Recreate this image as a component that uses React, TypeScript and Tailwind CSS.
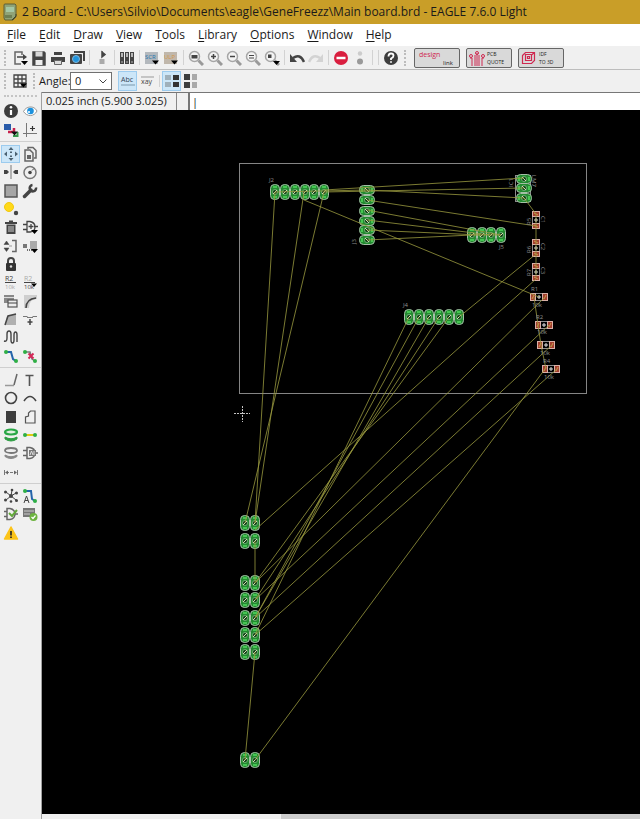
import type { ReactNode } from "react";

type Tool = { label: string; icon: ReactNode; active?: boolean };

const DARK = "#444444";

function Icon({ children }: { children: ReactNode }) {
  return (
    <svg viewBox="0 0 16 16" className="h-4 w-4" fill="none" stroke={DARK} strokeWidth="1.5">
      {children}
    </svg>
  );
}

const DropMark = () => <path d="M9 11h7l-3.500 4z" fill="#000" stroke="none" />;

function Magnifier({ children }: { children?: ReactNode }) {
  return (
    <>
      <path d="M10.500 10.500l4.500 4.500" stroke="#9a9a9a" strokeWidth="3" />
      <circle cx="6.500" cy="6.500" r="5" fill="#f4f4f4" stroke="#a6a6a6" strokeWidth="1.500" />
      {children}
    </>
  );
}

const fileTools: Tool[] = [
  {
    label: "Open",
    icon: (
      <>
        <path d="M10 5V2H3v12h6" stroke="#666" />
        <path d="M5 7h8" />
        <path d="M11 4l4 3-4 3z" fill={DARK} stroke="none" />
        <DropMark />
      </>
    ),
  },
  {
    label: "Save",
    icon: (
      <>
        <path d="M2 2h11l1 1v12H2z" fill={DARK} />
        <path d="M4.500 1.500h7v5h-7z" fill="#d8d8d8" stroke="none" />
        <path d="M4.500 10h7v5h-7z" fill="#eee" stroke="none" />
      </>
    ),
  },
  {
    label: "Print",
    icon: (
      <>
        <path d="M4 2h8v3H4zM1 7h14v5H1z" fill={DARK} stroke="none" />
        <path d="M4.500 10.500h7v4h-7z" fill="#ddd" stroke="#666" strokeWidth="1" />
      </>
    ),
  },
  {
    label: "CAM processor",
    icon: (
      <>
        <path d="M5 2h10v9" stroke="#444" strokeWidth="2" />
        <rect x="1" y="4" width="12" height="10" rx="1" fill={DARK} stroke="none" />
        <circle cx="7" cy="9" r="3.500" fill="#2093dc" stroke="#7fb8dc" strokeWidth="1" />
      </>
    ),
  },
];

const zoomTools: Tool[] = [
  {
    label: "Fit",
    icon: (
      <Magnifier>
        <rect x="3.500" y="5" width="6" height="3.500" fill={DARK} stroke="none" />
      </Magnifier>
    ),
  },
  {
    label: "Zoom in",
    icon: (
      <Magnifier>
        <path d="M4 6.500h5M6.500 4v5" />
      </Magnifier>
    ),
  },
  {
    label: "Zoom out",
    icon: (
      <Magnifier>
        <path d="M4 6.500h5" />
      </Magnifier>
    ),
  },
  {
    label: "Redraw",
    icon: (
      <Magnifier>
        <path d="M4 5.500h5M4 8h5" strokeWidth="1" />
      </Magnifier>
    ),
  },
  {
    label: "Select",
    icon: (
      <>
        <Magnifier>
          <rect x="4" y="4.500" width="3.500" height="3.500" fill={DARK} stroke="none" />
        </Magnifier>
        <DropMark />
      </>
    ),
  },
];

const sideGroups: { height: string; tools: (Tool | null)[] }[] = [
  {
    height: "h-[37px]",
    tools: [
      {
        label: "Info",
        icon: (
          <>
            <circle cx="8" cy="8" r="7" fill="#3d3d3d" stroke="none" />
            <path d="M8 7v5" stroke="#fff" strokeWidth="2.200" />
            <circle cx="8" cy="4.300" r="1.300" fill="#fff" stroke="none" />
          </>
        ),
      },
      {
        label: "Show",
        icon: (
          <>
            <path d="M1.500 8.500C4 3 12 2 15 8c-3 6-10 6-13.500.5z" fill="#fff" stroke="#999" strokeWidth="1" />
            <circle cx="8.500" cy="8" r="3.300" fill="#1c91dd" stroke="none" />
            <circle cx="7" cy="9" r="1" fill="#fff" stroke="none" />
          </>
        ),
      },
      {
        label: "Display",
        icon: (
          <>
            <rect x="1" y="2" width="7" height="6" fill="#2a5caa" stroke="none" />
            <path d="M5 10h6V6" stroke="#c8204c" strokeWidth="2.500" />
            <path d="M10 14h4.500v-4" stroke="#36994b" strokeWidth="2" />
            <path d="M8 9.500h7l-3.500 4z" fill="#111" stroke="none" />
          </>
        ),
      },
      {
        label: "Mark",
        icon: (
          <>
            <path d="M4.500 1v14M1 11.500h14" stroke="#777" strokeWidth="1" />
            <path d="M10.500 4v5M8 6.500h5" stroke="#333" strokeWidth="1.200" />
          </>
        ),
      },
    ],
  },
  {
    height: "h-[220px]",
    tools: [
      {
        label: "Move",
        active: true,
        icon: (
          <path
            d="M8 1l2.500 3h-5zM8 15l2.500-3h-5zM1 8l3-2.500v5zM15 8l-3-2.500v5zM7 5.500h2v1.500H7zM7 9.500h2V11H7z"
            fill="#4b6272"
            stroke="none"
          />
        ),
      },
      {
        label: "Copy",
        icon: (
          <>
            <path d="M6 3V1.500h5l3 3V12h-2" stroke="#666" />
            <path d="M3 4h5l3 3v8H3z" fill="#eee" stroke="#666" />
            <rect x="5" y="9" width="4" height="4" fill="#666" stroke="none" />
          </>
        ),
      },
      {
        label: "Mirror",
        icon: (
          <>
            <path d="M8 1v14" stroke="#777" strokeWidth="1" />
            <path d="M1 6h3l2 2-2 2H1zM15 6h-3l-2 2 2 2h3z" fill={DARK} stroke="none" />
          </>
        ),
      },
      {
        label: "Rotate",
        icon: (
          <>
            <circle cx="8" cy="8.500" r="6" stroke="#777" />
            <circle cx="8" cy="8.500" r="1.800" fill={DARK} stroke="none" />
            <path d="M10 6.500l2-2" strokeWidth="1" />
          </>
        ),
      },
      { label: "Group", icon: <rect x="2" y="2" width="12" height="12" fill="#a5a5a5" stroke="#555" /> },
      {
        label: "Change",
        icon: (
          <>
            <path d="M2.500 13.500l6.500-6.500" strokeWidth="3.500" strokeLinecap="round" />
            <path d="M14 4.500a3.200 3.200 0 1 1-3.500-2.500" strokeWidth="2.500" />
          </>
        ),
      },
      {
        label: "Paste",
        icon: (
          <>
            <circle cx="6" cy="6" r="4.500" fill="#ffd91a" stroke="#f2c80f" strokeWidth="1" />
            <circle cx="13" cy="12" r="2.200" fill={DARK} stroke="none" />
          </>
        ),
      },
      null,
      {
        label: "Delete",
        icon: (
          <>
            <path d="M2 4h12M6 2.500h4" strokeWidth="1.800" />
            <path d="M3.500 5.500h9V15h-9z" fill={DARK} stroke="none" />
            <path d="M6 7v6M8 7v6M10 7v6" stroke="#ccc" strokeWidth="1" />
          </>
        ),
      },
      {
        label: "Add",
        icon: (
          <>
            <path d="M5 2.500h3q5 1 5 5.500t-5 5H5zM1 5.500h4M1 10.500h4M12 7.500h4" strokeWidth="1.300" />
            <path d="M9 5v5M6.500 7.500h5" strokeWidth="1.300" />
            <DropMark />
          </>
        ),
      },
      {
        label: "Pinswap",
        icon: (
          <>
            <path d="M9 2.500h4v11H9" stroke="#666" />
            <path d="M3.500 3L6 6.500H1zM3.500 13.500L6 10H1zM6 8h3" fill={DARK} strokeWidth="0.500" />
          </>
        ),
      },
      {
        label: "Replace",
        icon: (
          <>
            <rect x="1" y="6" width="4" height="4" fill="#777" stroke="none" />
            <rect x="8" y="3" width="7" height="8" fill="#aaa" stroke="none" />
            <path d="M5 12h5" strokeDasharray="1 1" />
            <DropMark />
          </>
        ),
      },
      {
        label: "Lock",
        icon: (
          <>
            <path d="M5 8V5a3 3 0 0 1 6 0v3" strokeWidth="2" />
            <rect x="3" y="7" width="10" height="8" rx="1" fill="#333" stroke="none" />
            <circle cx="8" cy="10.500" r="1.200" fill="#ddd" stroke="none" />
          </>
        ),
      },
      null,
      {
        label: "Name",
        icon: (
          <>
            <text x="2" y="7" fontSize="7" fill="#444" stroke="none">R2</text>
            <path d="M2 8.500h11" strokeWidth="1" />
            <text x="2" y="15" fontSize="6" fill="#aaa" stroke="none">10k</text>
          </>
        ),
      },
      {
        label: "Value",
        icon: (
          <>
            <text x="2" y="7" fontSize="7" fill="#aaa" stroke="none">R2</text>
            <path d="M2 8.500h11" strokeWidth="1" />
            <text x="2" y="15" fontSize="6" fill="#444" stroke="none">10k</text>
            <path d="M9 9.500h6l-3 3.500z" fill="#000" stroke="none" />
          </>
        ),
      },
      {
        label: "Smash",
        icon: (
          <>
            <rect x="1" y="2" width="10" height="8" fill="#888" stroke="none" />
            <path d="M1 4.500h10" stroke="#ddd" strokeWidth="1" />
            <rect x="5" y="7" width="9" height="7" fill="#ededed" stroke="#555" strokeWidth="1.200" />
            <path d="M5 10h9" strokeWidth="1" />
          </>
        ),
      },
      {
        label: "Miter",
        icon: (
          <>
            <path d="M2 15V2h13v4q-8 0-8 9z" fill="#cfcfcf" stroke="none" />
            <path d="M4 15q0-9 10-10" />
          </>
        ),
      },
      {
        label: "Split",
        icon: (
          <>
            <path d="M2 14l2-9 9-2v11z" fill="#b0b0b0" stroke="none" />
            <path d="M2 14L5 5l8-2" />
          </>
        ),
      },
      {
        label: "Optimize",
        icon: (
          <>
            <path d="M1 5.500h4.500M10.500 5.500H15" stroke="#777" strokeWidth="1" />
            <path d="M5 6.500h6" stroke="#777" strokeWidth="1" />
            <path d="M8 8v6M5.500 11h5" />
          </>
        ),
      },
      {
        label: "Meander",
        icon: <path d="M1 12q3 1 3-3V5q0-3 2-3t2 3v6q0 3 1.500 3t1.500-3V6q0-3 1.500-3T14 6v7" strokeWidth="1.400" />,
      },
      null,
      {
        label: "Route",
        icon: (
          <>
            <path d="M3 4h5l2 7 3 2" stroke="#2464aa" strokeWidth="2" />
            <circle cx="3" cy="4" r="2" fill="#2faf45" stroke="none" />
            <circle cx="13" cy="13" r="2" fill="#2faf45" stroke="none" />
          </>
        ),
      },
      {
        label: "Ripup",
        icon: (
          <>
            <path d="M3 4h5l2 7 3 2" stroke="#777" strokeWidth="1.500" />
            <path d="M6.500 5.500l5 5M11.500 5.500l-5 5" stroke="#d52757" strokeWidth="2" />
            <circle cx="3" cy="4" r="2" fill="#2faf45" stroke="none" />
            <circle cx="13" cy="13" r="2" fill="#2faf45" stroke="none" />
          </>
        ),
      },
    ],
  },
  {
    height: "h-[110px]",
    tools: [
      {
        label: "Wire",
        icon: (
          <>
            <path d="M2 13.500h9" stroke="#999" />
            <path d="M11 13l3-11" stroke="#666" />
          </>
        ),
      },
      { label: "Text", icon: <path d="M3.500 3.500h8M7.500 3.500V14" stroke="#555" strokeWidth="1.600" /> },
      { label: "Circle", icon: <circle cx="8" cy="8" r="5.500" strokeWidth="1.600" /> },
      { label: "Arc", icon: <path d="M2 11q6-9 12 0" strokeWidth="1.600" /> },
      { label: "Rect", icon: <rect x="3" y="2" width="10" height="12" fill="#3d3d3d" stroke="none" /> },
      { label: "Polygon", icon: <path d="M3.500 14V8l3-1V4l2-2H13v12z" stroke="#555" strokeWidth="1.200" /> },
      {
        label: "Via",
        icon: (
          <>
            <path d="M2 10v2q6 4 12 0v-2q-6 3.500-12 0z" fill="#2f9e44" stroke="#2f9e44" strokeWidth="1" />
            <ellipse cx="8" cy="5" rx="6" ry="2.500" fill="#dff0df" stroke="#28a745" strokeWidth="2.200" />
          </>
        ),
      },
      {
        label: "Signal",
        icon: (
          <>
            <path d="M3 8h10" stroke="#dccb12" strokeWidth="2" />
            <circle cx="3" cy="8" r="2" fill="#2faf45" stroke="none" />
            <circle cx="13" cy="8" r="2" fill="#2faf45" stroke="none" />
          </>
        ),
      },
      {
        label: "Hole",
        icon: (
          <>
            <path d="M2 10v1.500q6 4 12 0V10q-6 3.500-12 0z" fill="#888" stroke="#888" strokeWidth="1" />
            <ellipse cx="8" cy="5.500" rx="6" ry="2.500" fill="#eee" stroke="#777" strokeWidth="1.800" />
          </>
        ),
      },
      {
        label: "Attribute",
        icon: (
          <>
            <path d="M5 2.500h3q5 1 5 5.500t-5 5.500H5zM1 5.500h4M1 10.500h4M13 8h3" stroke="#666" />
            <rect x="7" y="5" width="7" height="6" fill="#777" stroke="none" />
            <path d="M8 10l1.500-4L11 10M12 6v4" stroke="#ddd" strokeWidth="1" />
          </>
        ),
      },
      {
        label: "Dimension",
        icon: (
          <>
            <path d="M1.500 6v5M14.500 6v5" stroke="#777" strokeWidth="1" />
            <path d="M3 8.500h10" stroke="#777" strokeWidth="1" strokeDasharray="3 1" />
            <path d="M2 8.500l3-2v4zM14 8.500l-3-2v4z" fill="#666" stroke="none" />
          </>
        ),
      },
      null,
    ],
  },
  {
    height: "h-[55px]",
    tools: [
      {
        label: "Ratsnest",
        icon: (
          <>
            <path d="M8 8L3 4M8 8l5-3M8 8l-5 4M8 8l5 4M8 8l1-6" strokeWidth="1" />
            <g fill={DARK} stroke="none">
              <circle cx="8" cy="8" r="2" />
              <circle cx="2.500" cy="4" r="1.500" />
              <circle cx="9" cy="2" r="1.300" />
              <circle cx="13.500" cy="5" r="1.500" />
              <circle cx="2.500" cy="12" r="1.500" />
              <circle cx="8" cy="13.500" r="1.300" />
              <circle cx="13.500" cy="12.500" r="1.500" />
            </g>
          </>
        ),
      },
      {
        label: "Auto",
        icon: (
          <>
            <path d="M3 3h6l1 8 3 2" stroke="#2464aa" strokeWidth="2" />
            <circle cx="3" cy="3" r="2" fill="#2faf45" stroke="none" />
            <circle cx="13" cy="13" r="2" fill="#2faf45" stroke="none" />
            <path d="M2 15l2.500-7L7 15M3 12.500h3" strokeWidth="1" />
          </>
        ),
      },
      {
        label: "ERC",
        icon: (
          <>
            <path d="M4 2.500h3q5 1 5 5.500t-5 5.500H4zM1 5.500h3M1 10.500h3M12 8h3" stroke="#666" />
            <path d="M6 7l3 3 5-6" stroke="#62a83a" strokeWidth="2" />
          </>
        ),
      },
      {
        label: "DRC",
        icon: (
          <>
            <rect x="1" y="2" width="12" height="9" fill="#777" stroke="none" />
            <path d="M2 5h10M2 8h6" stroke="#ccc" strokeWidth="1" />
            <circle cx="11.500" cy="11" r="4" fill="#6db33f" stroke="none" />
            <path d="M9.500 11l1.500 1.500 2.500-3" stroke="#fff" strokeWidth="1.200" />
          </>
        ),
      },
      {
        label: "Errors",
        icon: (
          <>
            <path d="M8 2l6.500 12h-13z" fill="#fcc419" stroke="#fcc419" strokeLinejoin="round" />
            <path d="M8 6v4.500M8 11.500v1.500" stroke="#222" strokeWidth="1.600" />
          </>
        ),
      },
      null,
    ],
  },
];

const menus = ["File", "Edit", "Draw", "View", "Tools", "Library", "Options", "Window", "Help"];

function ToolButton({ tool }: { tool: Tool }) {
  return (
    <button
      aria-label={tool.label}
      className={
        tool.active
          ? "flex h-full w-[19px] items-center justify-center border border-[#9ccbee] bg-[#cce6f8]"
          : "flex h-full w-[19px] items-center justify-center"
      }
    >
      <Icon>{tool.icon}</Icon>
    </button>
  );
}

function Separator() {
  return (
    <div className="flex h-full w-[6px] justify-center py-1">
      <div className="w-px bg-[#d2d2d2]" />
    </div>
  );
}

function Grip() {
  return <div className="mx-1 h-4 border-l-2 border-dotted border-[#bcbcbc]" />;
}

function MainToolbar() {
  return (
    <div className="flex h-6 items-center border-b border-[#bdbdbd] bg-[#f0f0f0]">
      <Grip />
      {fileTools.map((tool) => (
        <ToolButton key={tool.label} tool={tool} />
      ))}
      <Separator />
      <ToolButton
        tool={{
          label: "Schematic",
          icon: (
            <>
              <path d="M8 1v6M8 2l3 2.500L8 7z" fill={DARK} />
              <rect x="5.500" y="9" width="5" height="5" fill="#aaa" stroke="none" />
            </>
          ),
        }}
      />
      <Separator />
      <ToolButton
        tool={{
          label: "Use library",
          icon: (
            <>
              <path d="M1 2h4v12H1zM6 2h4v12H6zM11 2h4v12h-4z" fill={DARK} stroke="none" />
              <path d="M3 3v4M8 3v4M13 3v4" stroke="#ddd" />
              <path d="M2.500 12h1M7.500 12h1M12.500 12h1" stroke="#ddd" />
            </>
          ),
        }}
      />
      <Separator />
      <ToolButton
        tool={{
          label: "Script",
          icon: (
            <>
              <rect x="1" y="2" width="13" height="12" fill="#b3b8bd" stroke="none" />
              <text x="1" y="9" fontSize="6" fill="#2475ad" stroke="none">SCR</text>
              <path d="M8 10.500h7l-3.500 4z" fill="#000" stroke="none" />
            </>
          ),
        }}
      />
      <ToolButton
        tool={{
          label: "Run ULP",
          icon: (
            <>
              <rect x="1" y="2" width="13" height="12" fill="#c0b7ab" stroke="none" />
              <text x="1" y="9" fontSize="6" fill="#d5974a" stroke="none">ULP</text>
              <path d="M8 10.500h7l-3.500 4z" fill="#000" stroke="none" />
            </>
          ),
        }}
      />
      <Separator />
      {zoomTools.map((tool) => (
        <ToolButton key={tool.label} tool={tool} />
      ))}
      <Separator />
      <ToolButton
        tool={{
          label: "Undo",
          icon: (
            <>
              <path d="M4 8q7-5 11 4" strokeWidth="2.500" />
              <path d="M1 4v8h7z" fill={DARK} stroke="none" />
            </>
          ),
        }}
      />
      <ToolButton
        tool={{
          label: "Redo",
          icon: (
            <>
              <path d="M12 8Q5 3 1 12" stroke="#d3d3d3" strokeWidth="2.500" />
              <path d="M15 4v8H8z" fill="#d3d3d3" stroke="none" />
            </>
          ),
        }}
      />
      <Separator />
      <ToolButton
        tool={{
          label: "Stop",
          icon: (
            <>
              <circle cx="8" cy="8" r="7" fill="#d91e3f" stroke="none" />
              <path d="M3.500 8h9" stroke="#fff" strokeWidth="2.500" />
            </>
          ),
        }}
      />
      <ToolButton
        tool={{
          label: "Go",
          icon: (
            <>
              <circle cx="8" cy="3.500" r="2.200" fill="#ccc" stroke="none" />
              <circle cx="8" cy="11.500" r="3" fill="#999" stroke="none" />
            </>
          ),
        }}
      />
      <Separator />
      <Separator />
      <ToolButton
        tool={{
          label: "Help",
          icon: (
            <>
              <circle cx="8" cy="8" r="7" fill="#3d3d3d" stroke="none" />
              <path d="M5.500 6.500q0-3 2.500-3t2.500 2.300Q10.500 7.500 8 8.500V10M8 11.200v1.600" stroke="#fff" strokeWidth="1.800" />
            </>
          ),
        }}
      />
      <Grip />
      <div className="ml-1 flex gap-[6px]">
        <button className="h-5 w-[46px] rounded-xs border border-[#666] bg-[#d9d9d9]" aria-label="Design link">
          <svg viewBox="0 0 44 18" className="block h-[18px] w-full">
            <text x="4" y="8" fontSize="7" fill="#cf2850">design</text>
            <text x="28" y="16" fontSize="6" fill="#222">link</text>
          </svg>
        </button>
        <button className="h-5 w-[46px] rounded-xs border border-[#666] bg-[#d9d9d9]" aria-label="PCB quote">
          <svg viewBox="0 0 44 18" className="block h-[18px] w-full" fill="none">
            <path d="M5 17v-8H3M8 17V6M10 17V4M12 17V6M15 17v-8h2" stroke="#cf2850" />
            <circle cx="4" cy="7" r="1.500" stroke="#cf2850" />
            <circle cx="10" cy="4" r="1.500" stroke="#cf2850" />
            <circle cx="16" cy="7" r="1.500" stroke="#cf2850" />
            <text x="20" y="7" fontSize="5" fill="#222">PCB</text>
            <text x="20" y="15" fontSize="5" fill="#222">QUOTE</text>
          </svg>
        </button>
        <button className="h-5 w-[46px] rounded-xs border border-[#666] bg-[#d9d9d9]" aria-label="IDF to 3D">
          <svg viewBox="0 0 44 18" className="block h-[18px] w-full" fill="none">
            <path d="M3.500 6.500l3-3h9v8l-3 3h-9zM6.500 5.500h6v6h-6zM12.500 6l3-2.500M8.500 7.500h2v2h-2z" stroke="#cf2850" strokeWidth="1.200" />
            <text x="20" y="7" fontSize="5" fill="#222">IDF</text>
            <text x="20" y="15" fontSize="5" fill="#222">TO 3D</text>
          </svg>
        </button>
      </div>
    </div>
  );
}

function AngleToolbar() {
  return (
    <div className="flex h-[22px] items-center bg-[#f0f0f0]">
      <Grip />
      <ToolButton
        tool={{
          label: "Grid",
          icon: (
            <>
              <path d="M2 2h12v12H2zM2 6h12M2 10h12M6 2v12M10 2v12" strokeWidth="1.300" />
              <path d="M8 10.500h7l-3.500 4z" fill="#000" stroke="none" />
            </>
          ),
        }}
      />
      <Grip />
      <label htmlFor="angle" className="w-[31px] text-[11px] whitespace-nowrap">
        Angle:
      </label>
      <div className="grid h-[18px] w-[42px] items-center border border-[#707070] bg-white">
        <select id="angle" className="col-start-1 row-start-1 w-full appearance-none pl-1 text-[11px] leading-4">
          <option>0</option>
        </select>
        <svg viewBox="0 0 8 5" className="pointer-events-none col-start-1 row-start-1 mr-1 h-[5px] w-2 justify-self-end" fill="none">
          <path d="M.5.5L4 4 7.500.5" stroke="#444" />
        </svg>
      </div>
      <div className="ml-[6px] flex h-5">
        <ToolButton
          tool={{
            label: "Readable text",
            active: true,
            icon: (
              <>
                <text x="1" y="9" fontSize="7" fill="#345" stroke="none">Abc</text>
                <path d="M1 12h14" stroke="#7b98ac" strokeWidth="1" />
              </>
            ),
          }}
        />
        <ToolButton
          tool={{
            label: "Mirrored text",
            icon: (
              <>
                <path d="M2 4h13" stroke="#999" strokeWidth="1" />
                <text x="2" y="11" fontSize="7" fill="#444" stroke="none">xay</text>
              </>
            ),
          }}
        />
        <Separator />
        <ToolButton
          tool={{
            label: "Left layer",
            active: true,
            icon: (
              <>
                <path d="M1 2h6v5H1zM1 9h6v5H1z" fill="#9fb0bb" stroke="none" />
                <path d="M9 2h6v5H9zM9 9h6v5H9z" fill="#333" stroke="none" />
              </>
            ),
          }}
        />
        <ToolButton
          tool={{
            label: "Right layer",
            icon: (
              <>
                <path d="M1 1h6v6H1zM1 9h6v6H1z" fill="#3d3d3d" stroke="none" />
                <path d="M9 1h5v6H9zM9 9h5v6H9z" fill="#a9a9a9" stroke="none" />
              </>
            ),
          }}
        />
      </div>
    </div>
  );
}

function SideBar() {
  return (
    <aside className="w-[42px] shrink-0 border-r border-[#a0a0a0] bg-[#f0f0f0] pt-[3px]">
      <div className="mx-1 mb-[5px] border-t-2 border-dotted border-[#c4c4c4]" />
      {sideGroups.map((group, i) => (
        <div key={i} className={i > 0 ? "mt-[2px] border-t border-[#cfcfcf] pt-[3px]" : ""}>
          <div className={`grid auto-rows-fr grid-cols-[19px_19px] pl-px ${group.height}`}>
            {group.tools.map((tool, j) => (tool ? <ToolButton key={tool.label} tool={tool} /> : <span key={j} />))}
          </div>
        </div>
      ))}
    </aside>
  );
}

// x1, y1, x2, y2 of every unrouted connection
const airwires = [
  [275, 192, 255, 523],
  [304, 192, 255, 523],
  [324, 192, 245, 523],
  [275, 192, 367, 190],
  [304, 200, 539, 297],
  [324, 190, 524, 178],
  [324, 192, 524, 188],
  [367, 190, 524, 198],
  [367, 200, 536, 226],
  [367, 210, 501, 235],
  [367, 220, 491, 235],
  [367, 230, 481, 235],
  [367, 240, 472, 235],
  [472, 235, 501, 235],
  [524, 198, 536, 214],
  [536, 214, 536, 278],
  [534, 297, 538, 325],
  [538, 325, 541, 345],
  [541, 345, 546, 369],
  [459, 317, 536, 254],
  [536, 279, 255, 530],
  [545, 297, 255, 583],
  [549, 325, 255, 600],
  [552, 345, 255, 618],
  [557, 369, 255, 635],
  [545, 369, 255, 760],
  [409, 317, 255, 635],
  [419, 317, 255, 618],
  [429, 317, 255, 618],
  [439, 317, 255, 600],
  [449, 317, 255, 583],
  [255, 541, 255, 583],
  [255, 652, 245, 760],
];

const tallPads = [
  ...[275, 285, 295, 305, 314, 324].map((x) => [x, 192]),
  ...[472, 482, 491, 501].map((x) => [x, 235]),
  ...[409, 419, 429, 439, 449, 459].map((x) => [x, 317]),
  ...[523, 541, 583, 600, 618, 635, 652, 760].flatMap((y) => [
    [245, y],
    [255, y],
  ]),
];

const widePads = [
  ...[190, 200, 211, 221, 230, 240].map((y) => [367, y]),
  ...[179, 188, 198].map((y) => [524, y]),
];

// x, y, rotation
const resistors = [
  [536, 220, 90],
  [536, 248, 90],
  [536, 272, 90],
  [539, 297, 0],
  [544, 325, 0],
  [546, 345, 0],
  [551, 369, 0],
];

const names: [string, number, number, number][] = [
  ["J2", 269, 182, 0],
  ["J3", 356, 244, -90],
  ["J5", 499, 249, 0],
  ["J4", 403, 307, 0],
  ["IC1", 513, 187, -90],
  ["LM7", 532, 175, 90],
  ["R5", 531, 225, -90],
  ["C1", 541, 216, 90],
  ["R6", 531, 253, -90],
  ["C2", 541, 243, 90],
  ["R7", 531, 276, -90],
  ["C3", 541, 267, 90],
  ["R1", 531, 291, 0],
  ["10k", 532, 307, 0],
  ["R2", 536, 319, 0],
  ["10k", 537, 334, 0],
  ["10k", 540, 355, 0],
  ["R4", 543, 363, 0],
  ["10k", 544, 379, 0],
];

function Pad({ x, y, wide }: { x: number; y: number; wide?: boolean }) {
  return (
    <g transform={`translate(${x} ${y})${wide ? " rotate(90)" : ""}`} fill="none">
      <rect x="-4.500" y="-7.500" width="9" height="15" rx="4" fill="#238a30" stroke="#a4bfa6" />
      <path d="M-2-5h4M-2 5h4" stroke="#45c552" strokeWidth="2" />
      <circle r="2.500" fill="#0d3d14" stroke="#83c288" strokeWidth="0.800" />
      <path d="M-2 2L2-2" stroke="#d3dcb4" />
    </g>
  );
}

function Resistor({ x, y, angle }: { x: number; y: number; angle: number }) {
  return (
    <g transform={`translate(${x} ${y}) rotate(${angle})`} fill="none">
      <rect x="-8" y="-3.500" width="16" height="7" fill="#000" stroke="#8c8c8c" />
      <rect x="-8.500" y="-3.500" width="5" height="7" fill="#a3402f" stroke="#d9b0a6" />
      <rect x="3.500" y="-3.500" width="5" height="7" fill="#a3402f" stroke="#d9b0a6" />
      <path d="M-7 2l2-4M5 2l2-4" stroke="#dcae58" strokeWidth="0.800" />
      <path d="M-2 0h4M0-2v4" stroke="#e4e4e4" />
    </g>
  );
}

function Board() {
  return (
    <svg viewBox="42 110 598 704" className="block h-[704px] w-[598px] shrink-0" role="img" aria-label="Board layout">
      <rect x="239.500" y="163.500" width="347" height="230" fill="none" stroke="#858585" />
      <rect x="515.500" y="175.500" width="15" height="26" fill="none" stroke="#8c8c8c" />
      {tallPads.map(([x, y]) => (
        <Pad key={`${x}-${y}`} x={x} y={y} />
      ))}
      {widePads.map(([x, y]) => (
        <Pad key={`${x}-${y}`} x={x} y={y} wide />
      ))}
      {resistors.map(([x, y, angle]) => (
        <Resistor key={y} x={x} y={y} angle={angle} />
      ))}
      <g stroke="#99993f" strokeWidth="0.800">
        {airwires.map(([x1, y1, x2, y2], i) => (
          <line key={i} x1={x1} y1={y1} x2={x2} y2={y2} />
        ))}
      </g>
      <g fill="#8f8f8f" fontSize="6">
        {names.map(([name, x, y, angle], i) => (
          <text key={i} transform={`translate(${x} ${y}) rotate(${angle})`}>
            {name}
          </text>
        ))}
      </g>
      <path d="M234 413.500h16M242.500 406v16" stroke="#c4c4c4" strokeDasharray="2 1" />
    </svg>
  );
}

export default function App() {
  return (
    <div className="flex h-screen flex-col overflow-hidden bg-[#f0f0f0] font-['Open_Sans',sans-serif] text-[#1a1a1a]">
      <header className="flex h-6 shrink-0 items-center bg-[#c99e28] pl-[3px]">
        <svg viewBox="0 0 14 18" className="h-[18px] w-[14px]" fill="none">
          <path d="M1 2q0-1 1-1h10l1 1v12l-3 3H2l-1-2z" fill="#8fa377" stroke="#5d5f35" />
          <path d="M3 4h8v5H3z" fill="#a3c7a4" />
          <path d="M2 12h7v3H2z" fill="#6d7f53" />
          <path d="M9 17l4-4v-2" stroke="#3f4326" />
        </svg>
        <h1 className="pl-[5px] text-[12px] whitespace-nowrap">
          2 Board - C:\Users\Silvio\Documents\eagle\GeneFreezz\Main board.brd - EAGLE 7.6.0 Light
        </h1>
      </header>

      <nav className="flex h-[22px] shrink-0 items-center gap-[13px] bg-white pl-[7px] text-[12px]">
        {menus.map((menu) => (
          <button key={menu}>
            <span className="underline underline-offset-2">{menu[0]}</span>
            {menu.slice(1)}
          </button>
        ))}
      </nav>

      <MainToolbar />
      <AngleToolbar />

      <div className="flex min-h-0 flex-1">
        <SideBar />
        <main className="flex min-w-0 flex-1 flex-col">
          <div className="flex h-[18px] shrink-0 border-t border-[#777] bg-[#f0f0f0]">
            <output className="w-[135px] border-r border-[#888] pl-1 text-[11px] leading-4 whitespace-nowrap">
              0.025 inch (5.900 3.025)
            </output>
            <div className="w-3 border-r border-[#777]" />
            <input
              aria-label="Command line"
              defaultValue="|"
              className="min-w-0 flex-1 border-l border-[#777] bg-white pl-[2px] text-[11px] leading-4 outline-none"
            />
          </div>
          <div className="min-h-0 flex-1 overflow-hidden bg-black">
            <Board />
          </div>
          <div className="flex h-[5px] shrink-0 bg-[#f0f0f0]">
            <div className="ml-[40%] flex-1 bg-[#cdcdcd]" />
          </div>
        </main>
      </div>
    </div>
  );
}
